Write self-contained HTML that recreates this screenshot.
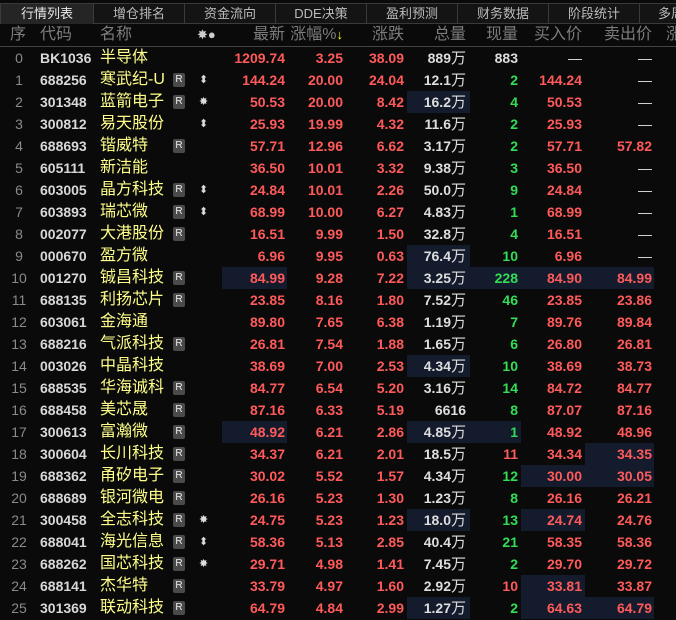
<!DOCTYPE html>
<html><head><meta charset="utf-8">
<style>
*{margin:0;padding:0;box-sizing:border-box}
body{width:676px;height:616px;background:#0a0a0a;overflow:hidden;font-family:"Liberation Sans","Noto Sans CJK SC",sans-serif;position:relative}
.tabs{position:absolute;left:0;top:3px;height:21px;width:676px;background:#141414;border-top:1px solid #3a3a3a;border-bottom:1px solid #3a3a3a}
.tab{position:absolute;top:0;height:20px;width:91px;border-right:1px solid #3a3a3a;color:#bbb;font-size:13px;text-align:center;line-height:20px}
.tab.a{background:#252525;color:#e8e8e8;border-left:1px solid #3a3a3a}
.hdr{position:absolute;top:24px;left:0;width:676px;height:23px;border-bottom:1px solid #444;color:#7c7c7c;font-size:16px;line-height:21px}
.row{position:absolute;left:0;width:676px;height:22px;font-size:14px;font-weight:bold;line-height:22px}
.row span,.hdr span{position:absolute;white-space:nowrap}
.i{left:0;width:38px;text-align:center;color:#8a8a8a;font-weight:normal}
.cd{left:40px;color:#d8d8d8}
.nm{left:100px;color:#ffff8a;font-weight:normal;font-size:16px}
.r{left:173px;top:4px;width:12px;height:14px;background:#4a4a4a;border-radius:2px;color:#eee;font-size:10px;line-height:14px;text-align:center;font-weight:normal}
.ic{left:199px;color:#ddd;font-size:11px;font-weight:normal}
.p{right:391px;color:#ff5a5a;text-align:right}
.z{right:333px;color:#ff5a5a}
.d{right:272px;color:#ff5a5a}
.v{right:210px;color:#ddd;font-weight:normal;font-size:15px}
.v b{font-weight:bold;font-size:14px}
.x{right:158px;color:#33dd55}
.b{right:94px;color:#ff5a5a}
.s{right:24px;color:#ff5a5a}
.w{color:#ddd}
.rd{color:#ff5a5a}
.dash{color:#ddd;font-weight:normal}
.h{position:absolute;top:0;height:22px;background:#131b2d}
.h1{left:222px;width:65px}.h2{left:407px;width:63px}.h3{left:470px;width:51px}.h4{left:521px;width:64px}.h5{left:585px;width:69px}
</style></head><body>
<div class="tabs">
<div class="tab a" style="left:0;width:94px">行情列表</div>
<div class="tab" style="left:94px">增仓排名</div>
<div class="tab" style="left:185px">资金流向</div>
<div class="tab" style="left:276px">DDE决策</div>
<div class="tab" style="left:367px">盈利预测</div>
<div class="tab" style="left:458px">财务数据</div>
<div class="tab" style="left:549px">阶段统计</div>
<div class="tab" style="left:640px;text-align:left;padding-left:18px;border:none">多周</div>
</div>
<div class="hdr">
<span style="left:10px">序</span><span style="left:40px">代码</span><span style="left:100px">名称</span>
<span style="left:197px;font-size:13px;color:#ccc">✸●</span>
<span style="right:391px">最新</span><span style="right:333px">涨幅%<b style="color:#ff0;font-weight:normal;font-size:13px">↓</b></span>
<span style="right:272px">涨跌</span><span style="right:210px">总量</span><span style="right:158px">现量</span>
<span style="right:94px">买入价</span><span style="right:24px">卖出价</span><span style="left:666px">涨</span>
</div>

<div class="row" style="top:47px"><span class="i">0</span><span class="cd">BK1036</span><span class="nm">半导体</span><span class="p">1209.74</span><span class="z">3.25</span><span class="d">38.09</span><span class="v"><b>889</b>万</span><span class="x w">883</span><span class="b dash">—</span><span class="s dash">—</span></div>
<div class="row" style="top:69px"><span class="i">1</span><span class="cd">688256</span><span class="nm">寒武纪-U</span><span class="r">R</span><span class="ic">⬍</span><span class="p">144.24</span><span class="z">20.00</span><span class="d">24.04</span><span class="v"><b>12.1</b>万</span><span class="x">2</span><span class="b">144.24</span><span class="s dash">—</span></div>
<div class="row" style="top:91px"><div class="h h2"></div><span class="i">2</span><span class="cd">301348</span><span class="nm">蓝箭电子</span><span class="r">R</span><span class="ic">✸</span><span class="p">50.53</span><span class="z">20.00</span><span class="d">8.42</span><span class="v"><b>16.2</b>万</span><span class="x">4</span><span class="b">50.53</span><span class="s dash">—</span></div>
<div class="row" style="top:113px"><span class="i">3</span><span class="cd">300812</span><span class="nm">易天股份</span><span class="ic">⬍</span><span class="p">25.93</span><span class="z">19.99</span><span class="d">4.32</span><span class="v"><b>11.6</b>万</span><span class="x">2</span><span class="b">25.93</span><span class="s dash">—</span></div>
<div class="row" style="top:135px"><span class="i">4</span><span class="cd">688693</span><span class="nm">锴威特</span><span class="r">R</span><span class="p">57.71</span><span class="z">12.96</span><span class="d">6.62</span><span class="v"><b>3.17</b>万</span><span class="x">2</span><span class="b">57.71</span><span class="s">57.82</span></div>
<div class="row" style="top:157px"><span class="i">5</span><span class="cd">605111</span><span class="nm">新洁能</span><span class="p">36.50</span><span class="z">10.01</span><span class="d">3.32</span><span class="v"><b>9.38</b>万</span><span class="x">3</span><span class="b">36.50</span><span class="s dash">—</span></div>
<div class="row" style="top:179px"><span class="i">6</span><span class="cd">603005</span><span class="nm">晶方科技</span><span class="r">R</span><span class="ic">⬍</span><span class="p">24.84</span><span class="z">10.01</span><span class="d">2.26</span><span class="v"><b>50.0</b>万</span><span class="x">9</span><span class="b">24.84</span><span class="s dash">—</span></div>
<div class="row" style="top:201px"><span class="i">7</span><span class="cd">603893</span><span class="nm">瑞芯微</span><span class="r">R</span><span class="ic">⬍</span><span class="p">68.99</span><span class="z">10.00</span><span class="d">6.27</span><span class="v"><b>4.83</b>万</span><span class="x">1</span><span class="b">68.99</span><span class="s dash">—</span></div>
<div class="row" style="top:223px"><span class="i">8</span><span class="cd">002077</span><span class="nm">大港股份</span><span class="r">R</span><span class="p">16.51</span><span class="z">9.99</span><span class="d">1.50</span><span class="v"><b>32.8</b>万</span><span class="x">4</span><span class="b">16.51</span><span class="s dash">—</span></div>
<div class="row" style="top:245px"><div class="h h2"></div><span class="i">9</span><span class="cd">000670</span><span class="nm">盈方微</span><span class="p">6.96</span><span class="z">9.95</span><span class="d">0.63</span><span class="v"><b>76.4</b>万</span><span class="x">10</span><span class="b">6.96</span><span class="s dash">—</span></div>
<div class="row" style="top:267px"><div class="h h1"></div><div class="h" style="left:407px;width:247px"></div><span class="i">10</span><span class="cd">001270</span><span class="nm">铖昌科技</span><span class="r">R</span><span class="p">84.99</span><span class="z">9.28</span><span class="d">7.22</span><span class="v"><b>3.25</b>万</span><span class="x">228</span><span class="b">84.90</span><span class="s">84.99</span></div>
<div class="row" style="top:289px"><span class="i">11</span><span class="cd">688135</span><span class="nm">利扬芯片</span><span class="r">R</span><span class="p">23.85</span><span class="z">8.16</span><span class="d">1.80</span><span class="v"><b>7.52</b>万</span><span class="x">46</span><span class="b">23.85</span><span class="s">23.86</span></div>
<div class="row" style="top:311px"><span class="i">12</span><span class="cd">603061</span><span class="nm">金海通</span><span class="p">89.80</span><span class="z">7.65</span><span class="d">6.38</span><span class="v"><b>1.19</b>万</span><span class="x">7</span><span class="b">89.76</span><span class="s">89.84</span></div>
<div class="row" style="top:333px"><span class="i">13</span><span class="cd">688216</span><span class="nm">气派科技</span><span class="r">R</span><span class="p">26.81</span><span class="z">7.54</span><span class="d">1.88</span><span class="v"><b>1.65</b>万</span><span class="x">6</span><span class="b">26.80</span><span class="s">26.81</span></div>
<div class="row" style="top:355px"><div class="h h2"></div><span class="i">14</span><span class="cd">003026</span><span class="nm">中晶科技</span><span class="p">38.69</span><span class="z">7.00</span><span class="d">2.53</span><span class="v"><b>4.34</b>万</span><span class="x">10</span><span class="b">38.69</span><span class="s">38.73</span></div>
<div class="row" style="top:377px"><span class="i">15</span><span class="cd">688535</span><span class="nm">华海诚科</span><span class="r">R</span><span class="p">84.77</span><span class="z">6.54</span><span class="d">5.20</span><span class="v"><b>3.16</b>万</span><span class="x">14</span><span class="b">84.72</span><span class="s">84.77</span></div>
<div class="row" style="top:399px"><span class="i">16</span><span class="cd">688458</span><span class="nm">美芯晟</span><span class="r">R</span><span class="p">87.16</span><span class="z">6.33</span><span class="d">5.19</span><span class="v"><b>6616</b></span><span class="x">8</span><span class="b">87.07</span><span class="s">87.16</span></div>
<div class="row" style="top:421px"><div class="h h1"></div><div class="h" style="left:407px;width:114px"></div><span class="i">17</span><span class="cd">300613</span><span class="nm">富瀚微</span><span class="r">R</span><span class="p">48.92</span><span class="z">6.21</span><span class="d">2.86</span><span class="v"><b>4.85</b>万</span><span class="x">1</span><span class="b">48.92</span><span class="s">48.96</span></div>
<div class="row" style="top:443px"><div class="h h5"></div><span class="i">18</span><span class="cd">300604</span><span class="nm">长川科技</span><span class="r">R</span><span class="p">34.37</span><span class="z">6.21</span><span class="d">2.01</span><span class="v"><b>18.5</b>万</span><span class="x rd">11</span><span class="b">34.34</span><span class="s">34.35</span></div>
<div class="row" style="top:465px"><div class="h" style="left:521px;width:133px"></div><span class="i">19</span><span class="cd">688362</span><span class="nm">甬矽电子</span><span class="r">R</span><span class="p">30.02</span><span class="z">5.52</span><span class="d">1.57</span><span class="v"><b>4.34</b>万</span><span class="x">12</span><span class="b">30.00</span><span class="s">30.05</span></div>
<div class="row" style="top:487px"><span class="i">20</span><span class="cd">688689</span><span class="nm">银河微电</span><span class="r">R</span><span class="p">26.16</span><span class="z">5.23</span><span class="d">1.30</span><span class="v"><b>1.23</b>万</span><span class="x">8</span><span class="b">26.16</span><span class="s">26.21</span></div>
<div class="row" style="top:509px"><div class="h h2"></div><div class="h h4"></div><span class="i">21</span><span class="cd">300458</span><span class="nm">全志科技</span><span class="r">R</span><span class="ic">✸</span><span class="p">24.75</span><span class="z">5.23</span><span class="d">1.23</span><span class="v"><b>18.0</b>万</span><span class="x">13</span><span class="b">24.74</span><span class="s">24.76</span></div>
<div class="row" style="top:531px"><span class="i">22</span><span class="cd">688041</span><span class="nm">海光信息</span><span class="r">R</span><span class="ic">⬍</span><span class="p">58.36</span><span class="z">5.13</span><span class="d">2.85</span><span class="v"><b>40.4</b>万</span><span class="x">21</span><span class="b">58.35</span><span class="s">58.36</span></div>
<div class="row" style="top:553px"><span class="i">23</span><span class="cd">688262</span><span class="nm">国芯科技</span><span class="r">R</span><span class="ic">✸</span><span class="p">29.71</span><span class="z">4.98</span><span class="d">1.41</span><span class="v"><b>7.45</b>万</span><span class="x">2</span><span class="b">29.70</span><span class="s">29.72</span></div>
<div class="row" style="top:575px"><div class="h h4"></div><span class="i">24</span><span class="cd">688141</span><span class="nm">杰华特</span><span class="r">R</span><span class="p">33.79</span><span class="z">4.97</span><span class="d">1.60</span><span class="v"><b>2.92</b>万</span><span class="x rd">10</span><span class="b">33.81</span><span class="s">33.87</span></div>
<div class="row" style="top:597px"><div class="h h2"></div><div class="h" style="left:521px;width:133px"></div><span class="i">25</span><span class="cd">301369</span><span class="nm">联动科技</span><span class="r">R</span><span class="p">64.79</span><span class="z">4.84</span><span class="d">2.99</span><span class="v"><b>1.27</b>万</span><span class="x">2</span><span class="b">64.63</span><span class="s">64.79</span></div>
</body></html>
